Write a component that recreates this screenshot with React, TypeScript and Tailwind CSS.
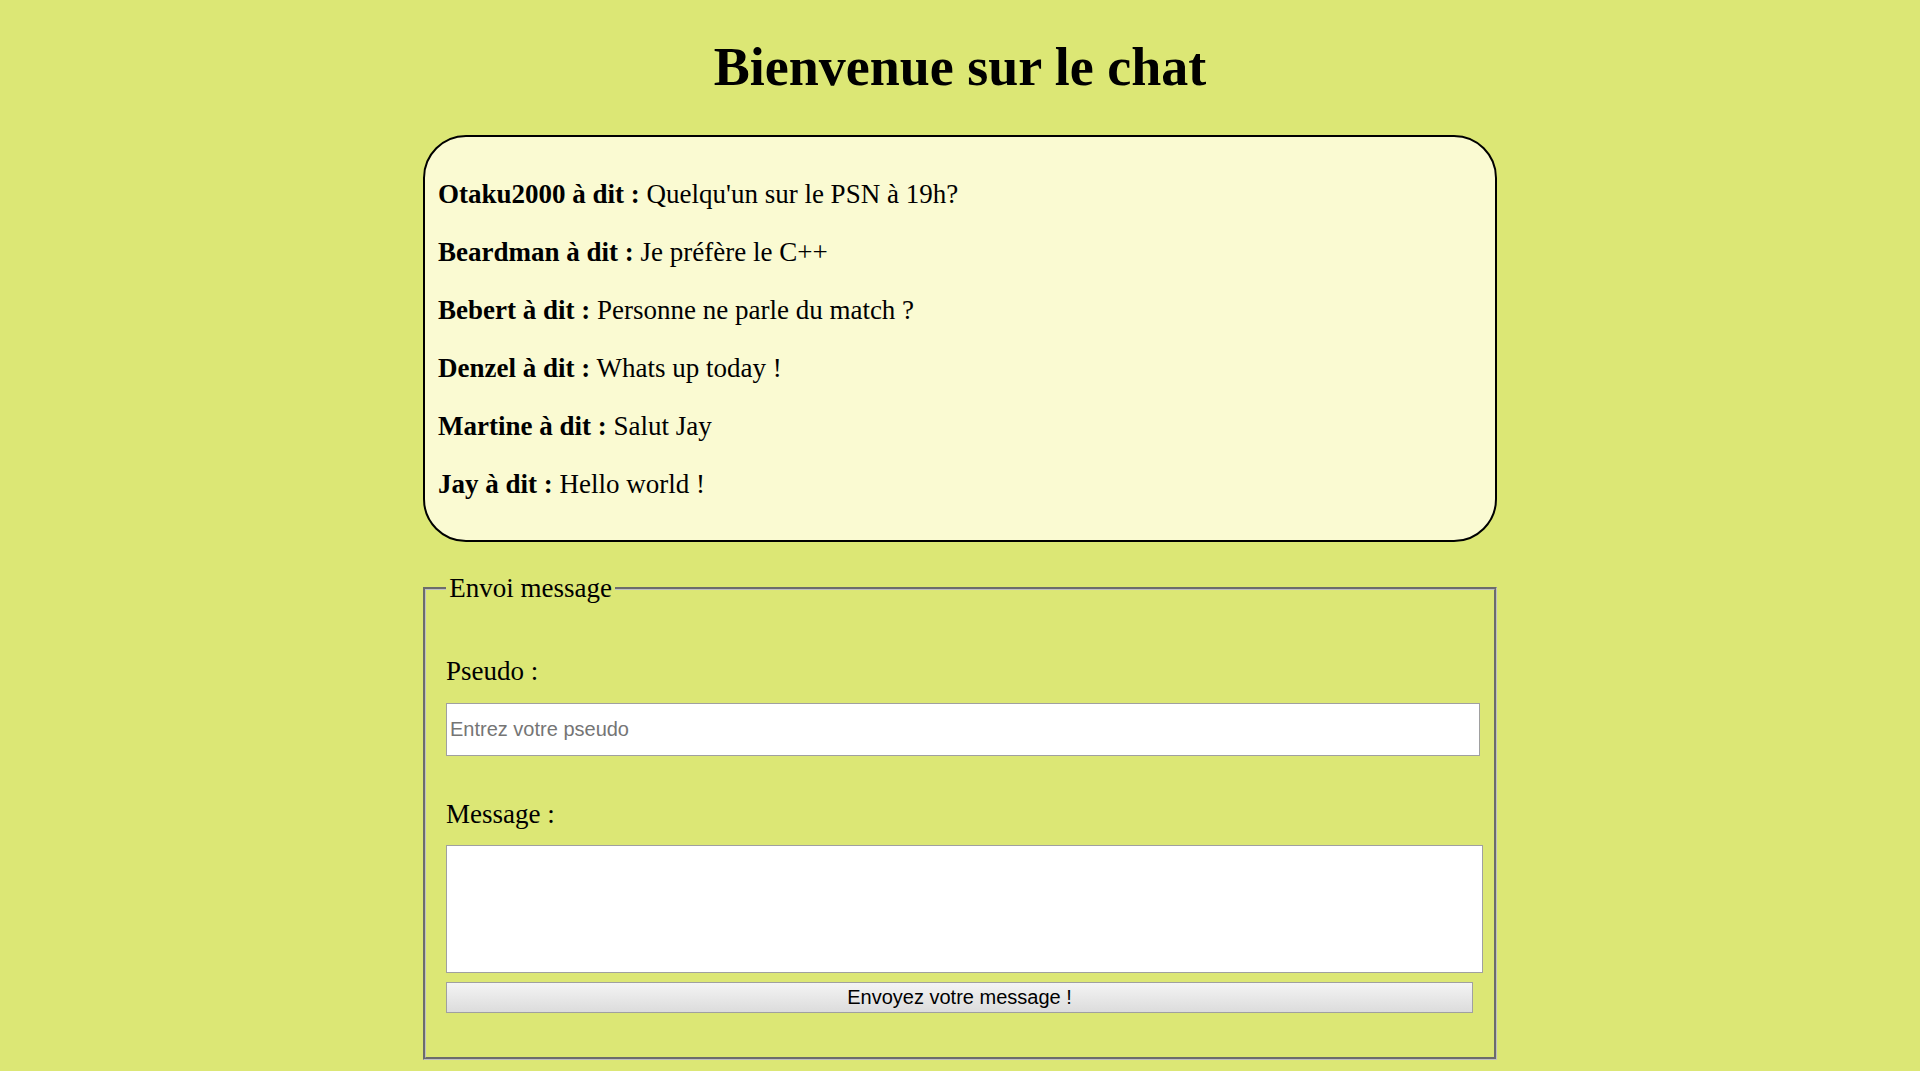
import React from 'react';

const messages = [
    { pseudo: 'Otaku2000', texte: "Quelqu'un sur le PSN à 19h?" },
    { pseudo: 'Beardman', texte: 'Je préfère le C++' },
    { pseudo: 'Bebert', texte: 'Personne ne parle du match ?' },
    { pseudo: 'Denzel', texte: 'Whats up today !' },
    { pseudo: 'Martine', texte: 'Salut Jay' },
    { pseudo: 'Jay', texte: 'Hello world !' },
];

export default function App() {
    return (
        <div className="min-h-screen bg-[#dce775] text-black font-['Liberation_Serif','Times_New_Roman',serif] pt-[36px] pb-[12px]">
            <h1 className="text-center text-[54px] font-bold leading-[normal]">Bienvenue sur le chat</h1>

            <div className="w-[1074px] mx-auto">
                {/* liste des messages */}
                <div className="mt-[37px] border-2 border-black rounded-[43px] bg-[#fafad2] pt-[42px] pb-[40px] pl-[13px] pr-[13px] flex flex-col gap-[27px]">
                    {messages.map((m, i) => (
                        <p key={i} className="text-[27px] leading-[31px]">
                            <strong className="font-bold">{m.pseudo} à dit :</strong> {m.texte}
                        </p>
                    ))}
                </div>

                {/* formulaire */}
                <fieldset className="mt-[31px] min-w-0 w-full border-[3px] [border-style:groove] border-[#c0c0c0] px-[20px] pt-0 pb-[44px]">
                    <legend className="text-[27px] leading-[normal] px-[3.3px]">Envoi message</legend>

                    <div className="mt-[52px] flex flex-col items-start">
                        <label htmlFor="pseudo" className="text-[27px] leading-[31px]">Pseudo :</label>
                        <input
                            id="pseudo"
                            type="text"
                            placeholder="Entrez votre pseudo"
                            className="mt-[16px] w-[1034px] h-[53px] shrink-0 bg-white border border-[#a0a0a0] px-[3px] text-[20px] font-['Liberation_Sans',Arial,sans-serif] placeholder:text-[#757575] outline-none"
                        />

                        <label htmlFor="message" className="mt-[43px] text-[27px] leading-[31px]">Message :</label>
                        <textarea
                            id="message"
                            className="mt-[15px] w-[1037px] h-[128px] shrink-0 bg-white border border-[#a0a0a0] p-[3px] text-[20px] font-['Liberation_Sans',Arial,sans-serif] resize-none outline-none"
                        ></textarea>

                        <button
                            type="button"
                            className="mt-[9px] w-[1027px] h-[31px] shrink-0 border border-[#a0a0a0] bg-gradient-to-b from-[#f4f4f4] to-[#dcdcdc] text-[20px] leading-[normal] font-['Liberation_Sans',Arial,sans-serif] text-black"
                        >
                            Envoyez votre message !
                        </button>
                    </div>
                </fieldset>
            </div>
        </div>
    );
}
